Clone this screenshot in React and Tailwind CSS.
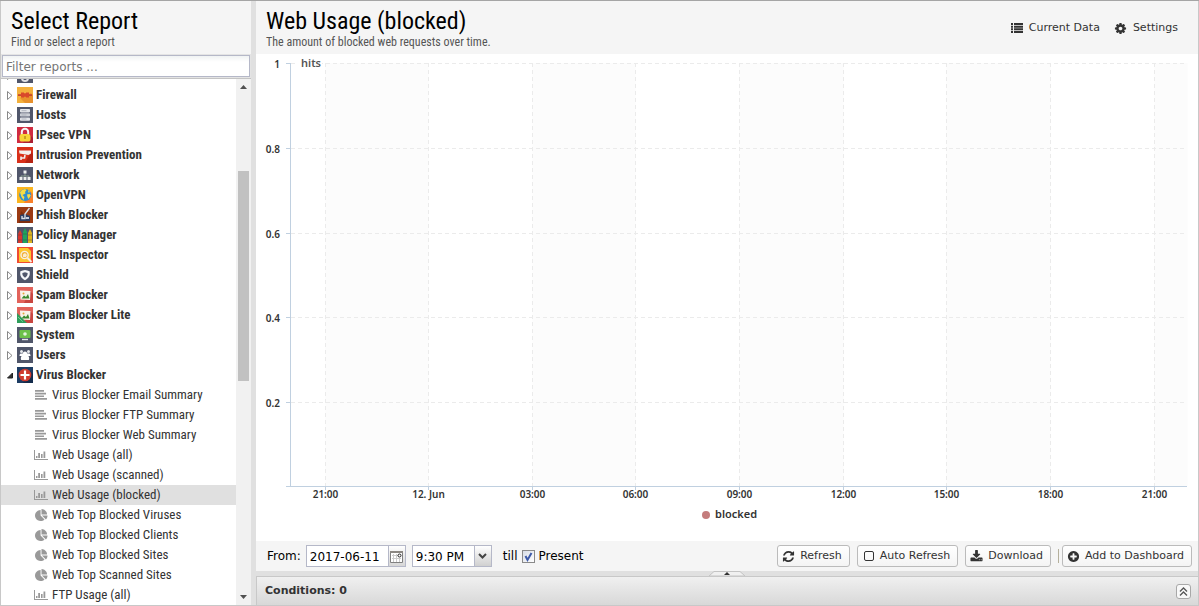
import React from "react";

const COND = "font-['Roboto_Condensed','Liberation_Sans_Narrow',sans-serif]";

const GLYPHS = {
  refresh: "M1639 1056q0 5-1 7-64 268-268 434.5t-478 166.5q-146 0-282.5-55t-243.5-157l-129 129q-19 19-45 19t-45-19-19-45v-448q0-26 19-45t45-19h448q26 0 45 19t19 45-19 45l-137 137q71 66 161 102t187 36q134 0 250-65t186-179q11-17 53-117 8-23 30-23h192q13 0 22.5 9.5t9.5 22.5zm25-800v448q0 26-19 45t-45 19h-448q-26 0-45-19t-19-45 19-45l138-138q-148-137-349-137-134 0-250 65t-186 179q-11 17-53 117-8 23-30 23h-199q-13 0-22.5-9.5t-9.5-22.5v-7q65-268 270-434.5t480-166.5q146 0 284 55.5t245 156.5l130-129q19-19 45-19t45 19 19 45z",
  gear: "M1152 896q0-106-75-181t-181-75-181 75-75 181 75 181 181 75 181-75 75-181zm512-109v222q0 12-8 23t-20 13l-185 28q-19 54-39 91 35 50 107 138 10 12 10 25t-9 23q-27 37-99 108t-94 71q-12 0-26-9l-138-108q-44 23-91 38-16 136-29 186-7 28-36 28h-222q-14 0-24.5-8.5t-11.5-21.5l-28-184q-49-16-90-37l-141 107q-10 9-25 9-14 0-25-11-126-114-165-168-7-10-7-23 0-12 8-23 15-21 51-66.5t54-70.5q-27-50-41-99l-183-27q-13-2-21-12.5t-8-23.5v-222q0-12 8-23t19-13l186-28q14-46 39-92-40-57-107-138-10-12-10-24 0-10 9-23 26-36 98.5-107.5t94.5-71.5q13 0 26 10l138 107q44-23 91-38 16-136 29-186 7-28 36-28h222q14 0 24.5 8.5t11.5 21.5l28 184q49 16 90 37l142-107q9-9 24-9 13 0 25 10 129 119 165 170 7 8 7 22 0 12-8 23-15 21-51 66.5t-54 70.5q26 50 41 98l183 28q13 2 21 12.5t8 23.5z",
  plus: "M1344 960v-128q0-26-19-45t-45-19h-256v-256q0-26-19-45t-45-19h-128q-26 0-45 19t-19 45v256h-256q-26 0-45 19t-19 45v128q0 26 19 45t45 19h256v256q0 26 19 45t45 19h128q26 0 45-19t19-45v-256h256q26 0 45-19t19-45zm320-64q0 209-103 385.5t-279.5 279.5-385.5 103-385.5-103-279.5-279.5-103-385.5 103-385.5 279.5-279.5 385.5-103 385.5 103 279.5 279.5 103 385.5z",
  download: "M1344 1344q0-26-19-45t-45-19-45 19-19 45 19 45 45 19 45-19 19-45zm256 0q0-26-19-45t-45-19-45 19-19 45 19 45 45 19 45-19 19-45zm128-224v320q0 40-28 68t-68 28h-1472q-40 0-68-28t-28-68v-320q0-40 28-68t68-28h465l135 136q58 56 136 56t136-56l136-136h464q40 0 68 28t28 68zm-325-569q17 41-14 70l-448 448q-18 19-45 19t-45-19l-448-448q-31-29-14-70 17-39 59-39h256v-448q0-26 19-45t45-19h256q26 0 45 19t19 45v448h256q42 0 59 39z",
  pie: "M768 890l546 546q-106 108-247.5 168t-298.5 60q-209 0-385.5-103t-279.5-279.5-103-385.5 103-385.5 279.5-279.5 385.5-103v762zm187 6h773q0 157-60 298.5t-168 247.5zm709-128h-768v-768q209 0 385.5 103t279.5 279.5 103 385.5z",
};

function Glyph({ name }) {
  return (
    <svg viewBox="0 0 1792 1792" className="size-[13px] shrink-0" fill="currentColor" aria-hidden="true">
      <path d={GLYPHS[name]} />
    </svg>
  );
}

function ListIcon() {
  return (
    <svg viewBox="0 0 12 10" className="h-[10px] w-3 shrink-0" fill="currentColor" aria-hidden="true">
      <path d="M0 0h2v2H0zM3 0h9v2H3zM0 2.700h2v2H0zM3 2.700h9v2H3zM0 5.300h2v2H0zM3 5.300h9v2H3zM0 8h2v2H0zM3 8h9v2H3z" />
    </svg>
  );
}

function LinesIcon() {
  return (
    <svg viewBox="0 0 12 10" className="h-[10px] w-3 shrink-0" fill="currentColor" aria-hidden="true">
      <path d="M0 0h9v1.700H0zM0 2.700h11v1.700H0zM0 5.400h9v1.700H0zM0 8.100h12v1.700H0z" />
    </svg>
  );
}

function BarsIcon() {
  return (
    <svg viewBox="0 0 14 12" className="h-3 w-[14px] shrink-0" fill="currentColor" aria-hidden="true">
      <path d="M0 1h1v9h13v1H0zM2 7h1.500v2H2zM4.200 4h1.800v5H4.200zM7 5h1.600v4H7zM9.500 2.500h1.800v6.500H9.500z" />
    </svg>
  );
}

function AppIcon({ name }) {
  const slate = <rect width="16" height="16" fill="#50566a" />;
  const art = {
    events: (<>{slate}<circle cx="8" cy="11" r="4" fill="#dfe1e6" /><circle cx="8" cy="11" r="2" fill="#50566a" /></>),
    firewall: (<>
      <rect width="16" height="16" fill="#f3b03c" /><path d="M14 6l2 2v8H8l-5-5z" fill="#e8912c" />
      <path d="M1 7.200h14v1.800H1z" fill="#c8462b" /><path d="M4 5.500h3v.8h2v-.8h3v5H9v-.8H7v.8H4z" fill="#d9482b" />
    </>),
    hosts: (<>{slate}
      <rect x="3" y="2" width="10" height="3.400" rx=".8" fill="#e3e5e9" /><rect x="3" y="6.200" width="10" height="3.400" rx=".8" fill="#cdd0d6" /><rect x="3" y="10.400" width="10" height="3.400" rx=".8" fill="#e3e5e9" />
      <path d="M4.500 3.700h5M4.500 8h5M4.500 12h5" stroke="#a5a9b4" strokeWidth=".8" />
    </>),
    ipsec: (<>
      <rect width="16" height="16" fill="#d02b40" /><path d="M12 7l4 4v5H6z" fill="#ab1f33" />
      <path d="M4.800 8V5a3.200 3.200 0 0 1 6.400 0v3" fill="none" stroke="#f4f4f4" strokeWidth="2" />
      <rect x="2.500" y="7" width="11" height="7.500" rx="2.600" fill="#f7d437" /><path d="M7.300 9h1.400v3H7.300z" fill="#b58a18" />
    </>),
    intrusion: (<>
      <rect width="16" height="16" fill="#d9301a" /><path d="M14 5l2 2v9H8z" fill="#b72413" />
      <path d="M2 3.500h12v3l-2.500 1.500L2.500 6.500z" fill="#f3f0ef" /><path d="M8 8l-.5 3H4.500M4 9.500v3.500" fill="none" stroke="#eee" strokeWidth="1.600" />
    </>),
    network: (<>{slate}
      <path d="M8 6v3M4 11V9h8v2" fill="none" stroke="#9db49c" strokeWidth=".8" />
      <path d="M6.500 3.500h3v3h-3zM2.500 10h3v3h-3zM6.500 10h3v3h-3zM10.500 10h3v3h-3z" fill="#edf0ed" />
    </>),
    openvpn: (<>
      <rect width="16" height="16" fill="#fbb51f" /><path d="M13 4l3 3v9H7z" fill="#f9802a" />
      <circle cx="8.200" cy="8" r="6" fill="#2f8fd0" />
      <path d="M3 5.500l2-2.500 3-1 1.500 1-1.500 2 .5 1.500-3 1.500 2 2-1 3-2-3zM10 7.500l2.500-.5 1.300 1.500-2.300 3.500-1-2zM11 3l2 2-1.500.7z" fill="#f7dc45" />
    </>),
    phish: (<>
      <rect width="16" height="16" fill="#9b3a13" /><path d="M4 4l9 9v3H2z" fill="#7d2d0e" />
      <path d="M3 8l5-1 5 2v5H3z" fill="#2f3f63" /><path d="M12.500 1L8 7v4.500H5V9" fill="none" stroke="#d8dde5" strokeWidth="1.400" /><path d="M9 10h3v2H9z" fill="#c5cede" />
    </>),
    policy: (<>{slate}
      <path d="M1 16V7l2-4 2 4v9z" fill="#d8372e" /><path d="M6 16V5l2-4 2 4v11z" fill="#1fa45c" /><path d="M11 16V6l2-4 2 4v10z" fill="#dfb51e" />
      <path d="M1 8h4M6 7h4M11 8h4M1 13h4M6 13h4M11 13h4" stroke="#3b3b3b" strokeOpacity=".5" strokeWidth=".8" />
    </>),
    ssl: (<>
      <rect width="16" height="16" fill="#f04a32" /><path d="M2 1h9l3 3v11H2z" fill="#fcc52e" />
      <circle cx="7.600" cy="8" r="3.600" fill="#f3b23f" stroke="#f7f1e4" strokeWidth="1.400" /><path d="M6 10V7.500L8 6l2 2-1 2z" fill="#fbeccb" /><path d="M10.500 11l4 4" stroke="#f8eee3" strokeWidth="1.800" />
    </>),
    shield: (<>{slate}
      <path d="M8 3c1.600.3 3 .8 4.600 1.200.8 4.200-.8 7-4.600 9C4.200 11.200 2.600 8.400 3.400 4.200 5 3.800 6.400 3.300 8 3z" fill="#f5f6f8" /><path d="M8 5.200l2.600.8c.2 2-.8 3.600-2.600 4.800-1.800-1.200-2.800-2.800-2.600-4.800z" fill="#50566a" />
    </>),
    spam: (<>
      <rect width="16" height="16" fill="#e2625a" /><path d="M13 4l3 3v9H7z" fill="#c94640" />
      <path d="M3 3.500l10.500.5-.5 9-9.500-.5z" fill="#f7f3ea" /><path d="M4.500 11.500l2.500-3 2 1.500 2-3 1.500 4.500z" fill="#3a8a2e" /><circle cx="6.500" cy="6.500" r="1" fill="#e5a53b" />
    </>),
    system: (<>{slate}
      <rect x="2.500" y="3" width="11" height="8" rx="1" fill="#6cc04a" /><circle cx="8" cy="7" r="1.800" fill="#e4f5dc" /><path d="M5 12.500h6" stroke="#e4e6ea" strokeWidth="1.400" />
    </>),
    users: (<>{slate}
      <circle cx="4.500" cy="4.500" r="1.500" fill="#e8eaee" /><circle cx="11.500" cy="4.500" r="1.500" fill="#e8eaee" /><circle cx="8" cy="6.800" r="2.200" fill="#fff" />
      <path d="M2.500 9c0-2 .8-2.500 2-2.500h7c1.200 0 2 .5 2 2.500h-2.200c.9 1 1.200 2.500.5 4H4.200c-.7-1.500-.4-3 .5-4z" fill="#fff" />
    </>),
    virus: (<>
      <rect width="16" height="16" fill="#1d3c63" /><path d="M13 4l3 3v9H6z" fill="#132b4b" />
      <circle cx="8" cy="8" r="6.300" fill="#cf3a2e" /><path d="M8 3.500v9M3.500 8h9" stroke="#fff" strokeWidth="2.200" />
    </>),
  };
  return (
    <svg viewBox="0 0 16 16" className="size-4 shrink-0" aria-hidden="true">
      {art[name === "spamlite" ? "spam" : name]}
      {name === "spamlite" && (<><path d="M0 6l10 10H0z" fill="#2f9e5b" /><path d="M1 10l5 5" stroke="#9bdcb4" strokeWidth="1" strokeDasharray="1 .6" /></>)}
    </svg>
  );
}

const groups = [
  ["Events", "events"], ["Firewall", "firewall"], ["Hosts", "hosts"], ["IPsec VPN", "ipsec"],
  ["Intrusion Prevention", "intrusion"], ["Network", "network"], ["OpenVPN", "openvpn"],
  ["Phish Blocker", "phish"], ["Policy Manager", "policy"], ["SSL Inspector", "ssl"],
  ["Shield", "shield"], ["Spam Blocker", "spam"], ["Spam Blocker Lite", "spamlite"],
  ["System", "system"], ["Users", "users"], ["Virus Blocker", "virus"],
];

const reports = [
  ["Virus Blocker Email Summary", "text"], ["Virus Blocker FTP Summary", "text"],
  ["Virus Blocker Web Summary", "text"], ["Web Usage (all)", "bars"],
  ["Web Usage (scanned)", "bars"], ["Web Usage (blocked)", "bars"],
  ["Web Top Blocked Viruses", "pie"], ["Web Top Blocked Clients", "pie"],
  ["Web Top Blocked Sites", "pie"], ["Web Top Scanned Sites", "pie"], ["FTP Usage (all)", "bars"],
];

function Sidebar() {
  return (
    <aside className="flex w-[251px] shrink-0 flex-col border-l border-[#c8c8c8]">
      <header className={`h-[53px] shrink-0 bg-[#f5f5f5] pl-[10px] pt-[5px] ${COND}`}>
        <h1 className="text-2xl leading-[30px] text-black">Select Report</h1>
        <p className="text-xs leading-3 text-[#555]">Find or select a report</p>
      </header>
      <div className="shrink-0 border-b border-[#c4c4c4] bg-[#e4e4e4] p-px">
        <input
          aria-label="Filter reports"
          placeholder="Filter reports ..."
          className="block h-[22px] w-full border border-[#b5b8c8] bg-white bg-linear-to-b from-[#f0f3f3] to-white to-30% px-[3px] pt-px font-['DejaVu_Sans',sans-serif] text-xs text-black placeholder:text-[#757575]"
        />
      </div>
      <div className="flex min-h-0 flex-1">
        <ul className={`flex min-w-0 flex-1 flex-col justify-end overflow-hidden bg-white text-[13px] text-[#333] ${COND}`}>
          {groups.map(([label, icon]) => (
            <li key={label} className="shrink-0">
              <button className="flex h-5 w-full items-center pl-[5px] text-left font-bold">
                <svg viewBox="0 0 8 12" className="mr-[3px] h-3 w-2 shrink-0" aria-hidden="true">
                  {icon === "virus"
                    ? <path d="M6.500 4v5H1.500z" fill="#333" stroke="#222" />
                    : <path d="M1.500 2.500v8l4.500-4z" fill="#fff" stroke="#888" />}
                </svg>
                <AppIcon name={icon} />
                <span className="ml-[3px]">{label}</span>
              </button>
            </li>
          ))}
          {reports.map(([label, kind]) => (
            <li key={label} className="shrink-0">
              <button className={`flex h-5 w-full items-center pl-[33px] text-left ${label === "Web Usage (blocked)" ? "bg-[#e0e0e0]" : ""}`}>
                <span className="flex w-[14px] shrink-0 justify-center text-[#999]">
                  {kind === "text" && <LinesIcon />}
                  {kind === "bars" && <BarsIcon />}
                  {kind === "pie" && <Glyph name="pie" />}
                </span>
                <span className="ml-1">{label}</span>
              </button>
            </li>
          ))}
        </ul>
        <div className="flex w-[15px] shrink-0 flex-col items-center bg-[#f1f1f1]" aria-hidden="true">
          <svg viewBox="0 0 15 16" className="h-4 w-[15px] shrink-0"><path d="M4 10l3.500-4L11 10z" fill="#505050" /></svg>
          <div className="flex-[76]" />
          <div className="w-[11px] flex-[210] bg-[#c1c1c1]" />
          <div className="flex-[208]" />
          <svg viewBox="0 0 15 16" className="h-4 w-[15px] shrink-0"><path d="M4 6l3.500 4L11 6z" fill="#505050" /></svg>
        </div>
      </div>
    </aside>
  );
}

const xTicks = [
  [69.5, "21:00"], [172.5, "12. Jun"], [276.5, "03:00"], [379.5, "06:00"], [483.5, "09:00"],
  [587.5, "12:00"], [690.5, "15:00"], [794.5, "18:00"], [898.5, "21:00"],
];
const yTicks = [[9.5, "1"], [94.5, "0.8"], [179.5, "0.6"], [263.5, "0.4"], [348.5, "0.2"]];

function Chart() {
  return (
    <svg viewBox="0 0 942 487" className="block h-full w-full font-['Noto_Sans',sans-serif]" role="img" aria-label="Blocked hits over time">
      {[0, 2, 4, 6, 8].map((i) => (
        <rect key={i} x={xTicks[i][0]} y="9" height="423" width={(xTicks[i + 1] ? xTicks[i + 1][0] : 931.5) - xTicks[i][0]} fill="#fcfcfc" />
      ))}
      <g stroke="#ebebeb" strokeDasharray="4 3">
        {yTicks.map(([y]) => <path key={y} d={`M35 ${y}H931`} />)}
        {xTicks.map(([x]) => <path key={x} d={`M${x} 9V432`} />)}
      </g>
      <g stroke="#c0d0e0">
        <path d="M34.500 9V432M30 432.500H931" />
        {yTicks.map(([y]) => <path key={y} d={`M30 ${y}h4`} />)}
        {xTicks.map(([x]) => <path key={x} d={`M${x} 433v3`} />)}
      </g>
      <rect x="42" y="3" width="24" height="13" fill="#fff" />
      <text x="45" y="13" className="fill-[#555] text-[11px] font-semibold">hits</text>
      <g className="fill-[#333] text-[10px] font-semibold">
        {yTicks.map(([y, label]) => <text key={label} x="24" y={y + 4} textAnchor="end">{label}</text>)}
        {xTicks.map(([x, label]) => <text key={x} x={x} y="444" textAnchor="middle">{label}</text>)}
      </g>
      <circle cx="450" cy="461" r="4" fill="#c47c7c" />
      <text x="459" y="464" className="fill-[#333] text-[11px] font-semibold">blocked</text>
    </svg>
  );
}

function ToolButton({ icon, children }) {
  return (
    <button className="flex h-[22px] items-center gap-[5px] rounded-[3px] border border-[#bbb] bg-linear-to-b from-white to-[#f4f4f4] pl-1 pr-[7px] text-[11px] text-[#333]">
      {icon}<span>{children}</span>
    </button>
  );
}

function Toolbar() {
  return (
    <div className="flex h-[30px] shrink-0 items-center bg-[#f5f5f5] pl-[11px] pr-[6px]">
      <label htmlFor="from-date" className="mr-[5px] text-xs text-black">From:</label>
      <div className="mr-[6px] flex h-[22px] w-[100px] border border-[#b5b8c8] bg-white">
        <input id="from-date" defaultValue="2017-06-11" className="min-w-0 flex-1 pl-[3px] pt-px text-xs text-black" />
        <button aria-label="Pick date" className="flex w-[17px] items-center justify-center border-l border-[#b5b8c8] bg-linear-to-b from-white to-[#d6d6d6]">
          <svg viewBox="0 0 13 13" className="size-[13px]" aria-hidden="true">
            <path d="M.5 2.500h12v10H.5z" fill="#fff" stroke="#808080" /><path d="M0 1h13v2H0z" fill="#8b8782" />
            <path d="M2 5.500h7M2 8.500h9M3.500 4v8M6.500 4v8M9.500 8v4" stroke="#ccc" /><circle cx="9.500" cy="5.500" r="1.500" fill="#fff" stroke="#222" />
          </svg>
        </button>
      </div>
      <div className="relative h-[22px] w-20 border border-[#b5b8c8] bg-white">
        <select aria-label="From time" defaultValue="9:30 PM" className="block h-full w-full appearance-none pl-[3px] pt-px text-xs text-black">
          <option>9:30 PM</option>
        </select>
        <span className="pointer-events-none absolute inset-y-0 right-0 flex w-[17px] items-center justify-center border-l border-[#b5b8c8] bg-linear-to-b from-white to-[#d0d0d0]">
          <svg viewBox="0 0 9 6" className="h-[6px] w-[9px]" aria-hidden="true"><path d="M1 1l3.500 3.500L8 1" fill="none" stroke="#444" strokeWidth="2" /></svg>
        </span>
      </div>
      <label className="ml-[11px] flex items-center text-xs text-black">
        till
        <span className="relative ml-1 mr-1 size-[13px]">
          <input type="checkbox" defaultChecked className="peer block size-[13px] appearance-none border border-[#8a8a8a] bg-linear-to-br from-[#d8dde6] to-white" />
          <svg viewBox="0 0 13 13" className="pointer-events-none absolute inset-0 hidden peer-checked:block" aria-hidden="true"><path d="M3.500 6l2 4L9.500 3" fill="none" stroke="#3e5aa8" strokeWidth="2" /></svg>
        </span>
        Present
      </label>
      <div className="ml-auto flex items-center gap-[7px]">
        <ToolButton icon={<Glyph name="refresh" />}>Refresh</ToolButton>
        <ToolButton icon={<svg viewBox="0 0 13 13" className="size-[13px] shrink-0" aria-hidden="true"><rect x="2.500" y="1.500" width="9" height="9" rx="1.500" fill="none" stroke="#333" /></svg>}>Auto Refresh</ToolButton>
        <ToolButton icon={<Glyph name="download" />}>Download</ToolButton>
        <div className="flex items-center gap-[3px]">
          <span className="h-[14px] w-px bg-[#b5b09c]" />
          <ToolButton icon={<Glyph name="plus" />}>Add to Dashboard</ToolButton>
        </div>
      </div>
    </div>
  );
}

export default function App() {
  return (
    <div className="flex h-screen overflow-hidden border-b border-t border-b-[#c8c8c8] border-t-[#a5a5a5] bg-[#e0e0e0] font-['DejaVu_Sans',sans-serif]">
      <Sidebar />
      <main className="ml-[5px] flex min-w-0 flex-1 flex-col border-r border-[#c8c8c8]">
        <header className="flex h-[53px] shrink-0 justify-between bg-[#f5f5f5] pl-[10px] pr-5">
          <div className={`pt-[5px] ${COND}`}>
            <h2 className="text-2xl leading-[30px] text-black">Web Usage (blocked)</h2>
            <p className="text-xs leading-3 text-[#555]">The amount of blocked web requests over time.</p>
          </div>
          <div className="flex items-center gap-[14px] pt-px text-[11px] text-[#333]">
            <button className="flex items-center gap-[6px]"><ListIcon />Current Data</button>
            <button className="flex items-center gap-[6px]"><Glyph name="gear" />Settings</button>
          </div>
        </header>
        <section className="min-h-0 flex-1 bg-white"><Chart /></section>
        <Toolbar />
        <div className="flex h-[5px] shrink-0 justify-center">
          <button aria-label="Expand conditions" className="h-[5px] w-9">
            <svg viewBox="0 0 36 5" className="block h-[5px] w-9" aria-hidden="true"><path d="M0 5l5-4.500h26L36 5z" fill="#f0f0f0" stroke="#c4c4c4" /><path d="M15 4l3-3 3 3z" fill="#333" /></svg>
          </button>
        </div>
        <footer className="flex h-[29px] shrink-0 items-center justify-between border-l border-t border-[#c8c8c8] bg-linear-to-b from-[#f0f0f0] to-[#d8d8d8] pl-2 pr-[7px]">
          <h3 className="text-[11px] font-bold text-[#333]">Conditions: 0</h3>
          <button aria-label="Expand" className="flex size-[15px] items-center justify-center rounded-[3px] border border-[#a8a8a8] bg-[#f8f8f8]">
            <svg viewBox="0 0 9 9" className="size-[9px]" fill="none" stroke="#555" strokeWidth="1.300" aria-hidden="true"><path d="M1 4.500L4.500 1 8 4.500M1 8.500L4.500 5 8 8.500" /></svg>
          </button>
        </footer>
      </main>
    </div>
  );
}
